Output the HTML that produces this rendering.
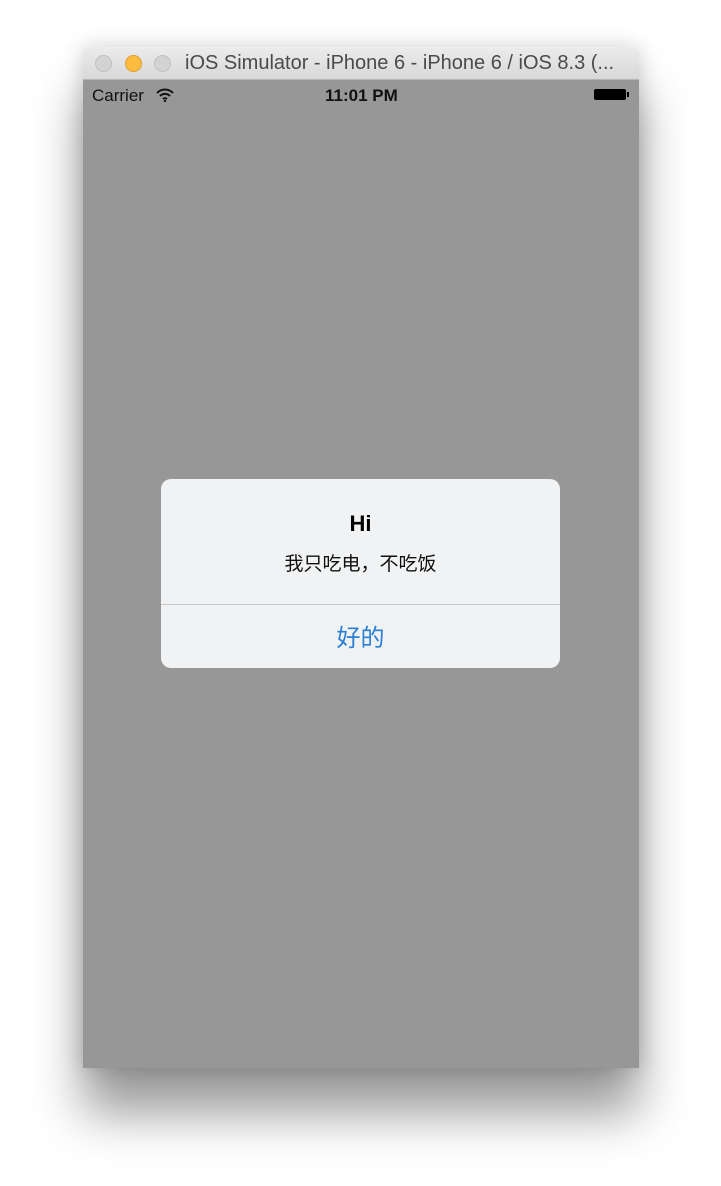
<!DOCTYPE html>
<html><head><meta charset="utf-8"><style>
body{margin:0;width:721px;height:1186px;background:#fff;position:relative;overflow:hidden;font-family:"Liberation Sans","Noto Sans CJK SC",sans-serif}
.win{position:absolute;left:83px;top:47px;width:556px;height:1021px;box-shadow:0 45px 50px rgba(0,0,0,.4),0 0 22px rgba(0,0,0,.18);border-radius:5px 5px 0 0;overflow:hidden}
.tb{height:33px;background:linear-gradient(#ececec,#d8d8d8);border-bottom:1px solid #b5b5b5;box-sizing:border-box;position:relative}
.dot{position:absolute;top:8px;width:17px;height:17px;border-radius:50%;background:#d3d3d3;border:1px solid #c0c0c0;box-sizing:border-box}
.tt{position:absolute;left:102px;top:5px;font-size:20px;color:#4a4a4a;white-space:nowrap}
.scr{position:absolute;top:33px;left:0;right:0;bottom:0;background:#979797}
.sb{position:absolute;top:6px;font-size:17px;color:#111}
.al{position:absolute;left:78px;top:399px;width:399px;height:189px;border-radius:10px;background:#f1f2f3;overflow:hidden}
</style></head><body>
<div class="win">
<div class="tb">
<div class="dot" style="left:12px"></div>
<div class="dot" style="left:42px;background:#fdbc40;border-color:#e0a130"></div>
<div class="dot" style="left:71px"></div>
<div class="tt">iOS Simulator - iPhone 6 - iPhone 6 / iOS 8.3 (...</div>
</div>
<div class="scr">
<div class="sb" style="left:9px">Carrier</div>
<svg style="position:absolute;left:73px;top:8px" width="18" height="14" viewBox="0 0 18 14"><path d="M1 5a11 11 0 0 1 16 0M4 8a7 7 0 0 1 10 0M7 11a3 3 0 0 1 4 0" stroke="#111" stroke-width="2" fill="none"/><circle cx="9" cy="13" r="1.2" fill="#111"/></svg>
<div class="sb" style="left:242px;font-weight:bold;font-size:17px;top:6px">11:01 PM</div>
<div style="position:absolute;left:511px;top:9px;width:32px;height:11px;background:#000;border-radius:2px"></div>
<div style="position:absolute;left:544px;top:12px;width:2px;height:5px;background:#000"></div>
<div class="al">
<div style="position:absolute;top:32px;width:100%;text-align:center;font-weight:bold;font-size:22px;color:#000">Hi</div>
<div style="position:absolute;top:70px;width:100%;text-align:center;font-size:19px;color:#111">我只吃电，不吃饭</div>
<div style="position:absolute;top:125px;width:100%;height:1px;background:#c8c8c8"></div>
<div style="position:absolute;top:139px;width:100%;text-align:center;font-size:24px;color:#2a7fd4">好的</div>
</div>
</div>
</div>
</body></html>
